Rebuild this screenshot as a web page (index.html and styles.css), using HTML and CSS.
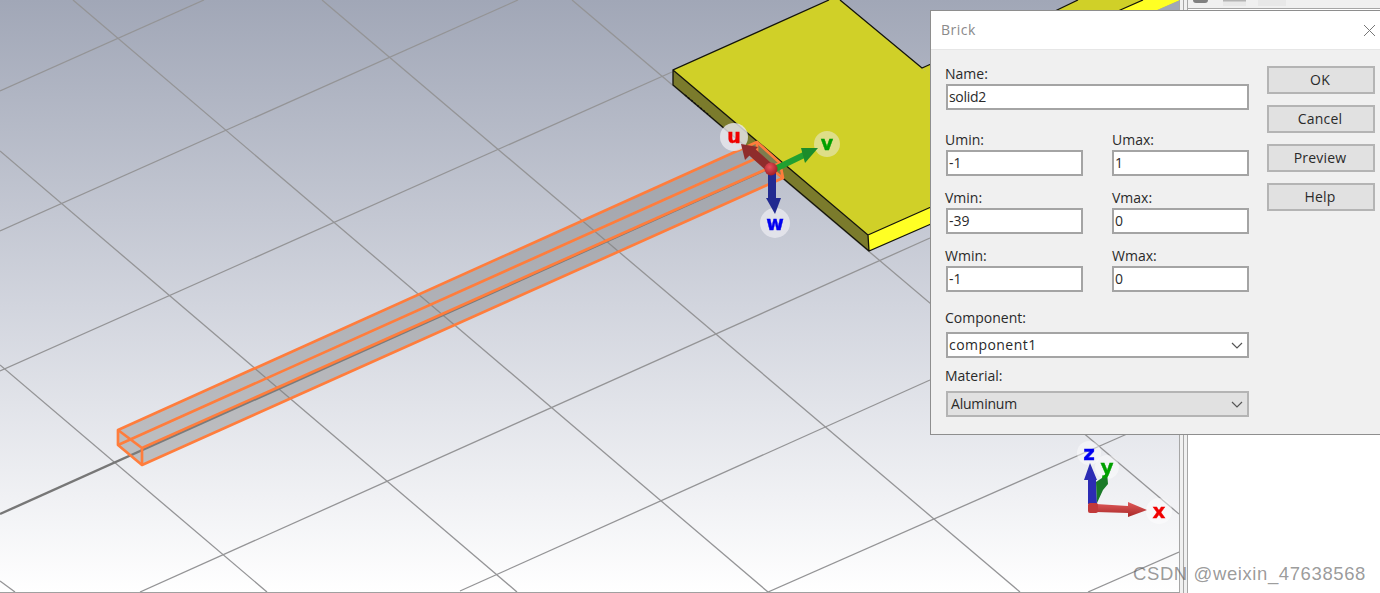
FILE: index.html
```html
<!DOCTYPE html>
<html lang="en">
<head>
<meta charset="utf-8">
<title>Brick</title>
<link rel="stylesheet" href="styles.css">
</head>
<body>
<div class="app">
  <main class="viewport">
    <svg class="scene" viewBox="0 0 1179 592" width="1179" height="592" aria-label="3D view">
      <defs>
        <radialGradient id="ball" cx="40%" cy="35%" r="70%">
          <stop offset="0" stop-color="#e8505a"/>
          <stop offset="1" stop-color="#9c1c24"/>
        </radialGradient>
        <linearGradient id="xshaft" x1="0" y1="0" x2="0" y2="1">
          <stop offset="0" stop-color="#e05a5a"/>
          <stop offset="1" stop-color="#a82828"/>
        </linearGradient>
      </defs>
      <g class="grid">
        <path d="M0 91L204 0"/>
        <path d="M0 231L518 0"/>
        <path d="M0 371L672 72"/>
        <path d="M140 592L930 238"/>
        <path d="M460 591L930 380"/>
        <path d="M768 592L1127 434"/>
        <path d="M1088 592L1179 552"/>
        <path d="M0 581L15 592"/>
        <path d="M0 365L267 592"/>
        <path d="M0 151L517 592"/>
        <path d="M73 0L768 592"/>
        <path d="M322 0L1020 592"/>
        <path d="M572 0L1179 514"/>
      </g>
      <path class="axis" d="M0 514L770 168"/>
      <polygon class="plate-back" points="1055,11 1078,0 1180,0 1180,11"/>
      <polygon class="plate-back-edge" points="1118,11 1143,0 1180,0 1155,11"/>
      <polygon class="plate-gap" points="1155,11 1180,0 1180,11"/>
      <path class="plate-line" d="M1118 11L1143 0M1055 11L1078 0"/>
      <polygon class="plate-back" points="922,68 931,64 931,78"/>
      <polygon class="plate-side" points="673,70 868,235 869,251 673,85"/>
      <polygon class="plate-front" points="868,235 931,207 931,224 869,251"/>
      <polygon class="plate-top" points="673,70 829,0 840,0 931,76 931,207 868,235"/>
      <path class="plate-line" d="M829 0L673 70L673 85L869 251L931 224M673 70L868 235L869 251M868 235L931 207M840 0L922 68L931 64"/>
      <path class="plate-jag" d="M685 95L710 116"/>
      <polygon class="bar-fill" points="118,430 757,142 780,163 783,178 142,465 118,445"/>
      <g class="bar-line">
        <path d="M118 430L757 142L780 163L783 178L142 465L118 445Z"/>
        <path d="M118 445L757 158L783 178M142 448L780 163M118 430L142 448L142 465M757 142L757 158"/>
      </g>
      <circle class="halo" cx="734" cy="137" r="14"/>
      <circle class="halo-v" cx="827" cy="144" r="13"/>
      <circle class="halo" cx="775" cy="223" r="15"/>
      <path class="u-shaft" d="M770 168L752 152"/>
      <polygon class="u-head" points="741,144 758,147 745,160"/>
      <path class="v-shaft" d="M775 169L806 154"/>
      <polygon class="v-head" points="818,148 801,148 805,163"/>
      <path class="w-shaft" d="M772 172L772 200"/>
      <polygon class="w-head" points="766,198 781,198 775,214"/>
      <circle cx="771" cy="169" r="6.5" fill="url(#ball)"/>
      <text class="glyph red" x="734" y="143">u</text>
      <text class="glyph green" x="827" y="150">v</text>
      <text class="glyph blue" x="775" y="230">w</text>
      <circle class="halo-soft" cx="1089" cy="453" r="12"/>
      <circle class="halo-soft" cx="1107" cy="467" r="12"/>
      <circle class="halo-soft" cx="1159" cy="511" r="13"/>
      <polygon class="z-arrow" points="1088,504 1088,480 1084,480 1090,463 1097,480 1096,480 1097,504"/>
      <polygon class="y-arrow" points="1097,503 1096,482 1102,478 1107,472 1108,484 1103,490"/>
      <polygon class="x-arrow" points="1096,504 1128,506 1128,502 1147,510 1128,517 1128,513 1096,512" fill="url(#xshaft)"/>
      <rect x="1088" y="503" width="10" height="10" rx="2" fill="#c23a3a"/>
      <text class="glyph-sm blue" x="1089" y="460">z</text>
      <text class="glyph-sm green" x="1107" y="474">y</text>
      <text class="glyph-sm red" x="1159" y="518">x</text>
    </svg>
  </main>
  <div class="splitter"></div>
  <aside class="panel">
    <div class="panel-tools">
      <span class="tool tool-round"></span>
      <span class="tool tool-a"></span>
      <span class="tool tool-b"></span>
    </div>
    <div class="panel-body"></div>
  </aside>
</div>

<section class="dialog">
  <header class="dialog-title">
    <span class="title-text">Brick</span>
    <svg class="close" width="13" height="13" viewBox="0 0 13 13"><path d="M1 1L12 12M12 1L1 12"/></svg>
  </header>
  <div class="dialog-body">
    <form class="form">
      <label class="label">Name:</label>
      <div class="input name-input">solid2</div>
      <div class="pairs">
        <div class="pair"><label class="label">Umin:</label><div class="input">-1</div></div>
        <div class="pair"><label class="label">Umax:</label><div class="input">1</div></div>
        <div class="pair"><label class="label">Vmin:</label><div class="input">-39</div></div>
        <div class="pair"><label class="label">Vmax:</label><div class="input">0</div></div>
        <div class="pair"><label class="label">Wmin:</label><div class="input">-1</div></div>
        <div class="pair"><label class="label">Wmax:</label><div class="input">0</div></div>
      </div>
      <label class="label comp-label">Component:</label>
      <div class="input select comp-value">component1
        <svg class="chev" width="12" height="7" viewBox="0 0 12 7"><path d="M1 1L6 6L11 1"/></svg>
      </div>
      <label class="label mat-label">Material:</label>
      <div class="input select mat-value disabled">Aluminum
        <svg class="chev" width="12" height="7" viewBox="0 0 12 7"><path d="M1 1L6 6L11 1"/></svg>
      </div>
    </form>
    <div class="buttons">
      <button class="btn" type="button">OK</button>
      <button class="btn" type="button">Cancel</button>
      <button class="btn" type="button">Preview</button>
      <button class="btn" type="button">Help</button>
    </div>
  </div>
</section>
<div class="watermark">CSDN @weixin_47638568</div>
</body>
</html>
```
FILE: styles.css
```css
* { box-sizing: border-box; }
html, body { margin: 0; height: 593px; overflow: hidden; background: #fff; }
body { position: relative; font-family: "Open Sans", "Noto Sans", sans-serif; }

.app { display: flex; width: 1380px; height: 593px; }

.viewport {
  width: 1179px;
  height: 593px;
  border-bottom: 1px solid #a0a0a0;
  background: linear-gradient(#a1a7b7 0%, #d2d5de 52%, #ffffff 100%);
  flex: none;
}
.scene { display: block; filter: blur(0.3px); }
.grid path { stroke: #949496; stroke-width: 1.3; fill: none; }
.axis { stroke: #777; stroke-width: 2.4; fill: none; }
.plate-top { fill: #d0d028; }
.plate-side { fill: #7b7b2c; }
.plate-front { fill: #ffff24; }
.plate-back { fill: #d0d028; }
.plate-back-edge { fill: #ffff24; }
.plate-gap { fill: #a1a7b7; }
.plate-line { stroke: #14140a; stroke-width: 1.3; fill: none; }
.plate-jag { stroke: #111; stroke-width: 1.5; stroke-dasharray: 2 2; fill: none; }
.bar-fill { fill: rgba(128, 128, 128, 0.42); }
.bar-line path { stroke: #ff7d3c; stroke-width: 2.7; fill: none; stroke-linejoin: round; }
.halo { fill: rgba(232, 232, 238, 0.82); }
.halo-v { fill: rgba(232, 232, 200, 0.6); }
.halo-soft { fill: rgba(255, 255, 255, 0.45); }
.u-shaft { stroke: #8f2c2c; stroke-width: 9; }
.u-head { fill: #8f2c2c; }
.v-shaft { stroke: #22a030; stroke-width: 6; }
.v-head { fill: #1c8c2a; }
.w-shaft { stroke: #222a90; stroke-width: 8; }
.w-head { fill: #222a90; }
.z-arrow { fill: #2c2cb4; }
.y-arrow { fill: #1a7a28; }
.glyph, .glyph-sm {
  font-family: "DejaVu Sans", sans-serif;
  font-weight: 700;
  text-anchor: middle;
  stroke-width: 0.4;
}
.glyph { font-size: 19px; }
.glyph-sm { font-size: 20px; }
.red { fill: #f00000; stroke: #f00000; }
.green { fill: #00a000; stroke: #00a000; }
.blue { fill: #0000f0; stroke: #0000f0; }

.splitter {
  width: 9px;
  height: 593px;
  flex: none;
  background: #f0f0f0;
  border-left: 1px solid #a6a6a6;
  border-right: 1px solid #a6a6a6;
  box-shadow: inset 3px 0 0 #f0f0f0, inset 4px 0 0 #a6a6a6;
}
.panel { flex: 1; display: flex; flex-direction: column; }
.panel-tools {
  height: 9px;
  flex: none;
  display: flex;
  background: #f0f0f0;
  border-bottom: 1px solid #a6a6a6;
  padding-left: 5px;
  overflow: hidden;
}
.tool { display: block; height: 6px; }
.tool-round { width: 15px; height: 3px; background: #808080; border-radius: 0 0 8px 8px; }
.tool-a { width: 23px; background: linear-gradient(#b4b4b4 1px, #e8e8e8 2px); margin-left: 15px; }
.tool-b { width: 28px; background: #e8e8e8; margin-left: 12px; }
.panel-body { flex: 1; background: #fff; }

.dialog {
  position: absolute;
  left: 930px;
  top: 10px;
  width: 452px;
  height: 425px;
  background: #f0f0f0;
  border: 1px solid #8e8e8e;
  color: #2a2a2a;
  font-size: 14px;
  line-height: 16px;
}
.dialog-title {
  height: 39px;
  background: #fff;
  border-bottom: 1px solid #e6e6e6;
  color: #8a8a8a;
  display: flex;
  align-items: center;
  justify-content: space-between;
  padding: 0 5px 0 10px;
}
.title-text { letter-spacing: 0.5px; }
.close path { stroke: #777; stroke-width: 1; fill: none; }
.dialog-body {
  display: flex;
  padding: 16px 0 0 15px;
  gap: 18px;
}
.form { width: 303px; display: flex; flex-direction: column; }
.label { display: block; height: 18px; margin-left: -1px; }
.pair:nth-child(even) .label { margin-left: 0; }
.input {
  height: 26px;
  background: #fff;
  border: 2px solid #a4a4a4;
  padding-left: 1px;
  line-height: 22px;
  position: relative;
}
.name-input { letter-spacing: -0.3px; }
.pairs {
  display: grid;
  grid-template-columns: 137px 137px;
  justify-content: space-between;
  margin-top: 22px;
  row-gap: 14px;
}
.comp-label { margin-top: 18px; }
.select { margin-top: 4px; }
.comp-value { letter-spacing: 0.45px; }
.mat-label { margin-top: 10px; }
.mat-value { margin-top: 5px; letter-spacing: -0.2px; }
.disabled { background: #e1e1e1; border-color: #b4b4b4; padding-left: 3px; }
.chev {
  position: absolute;
  right: 4px;
  top: 8px;
}
.chev path { stroke: #555; stroke-width: 1.2; fill: none; }
.buttons { width: 108px; display: flex; flex-direction: column; gap: 11px; }
.btn {
  height: 28px;
  padding: 0 2px 0 0;
  font: inherit;
  letter-spacing: 0.2px;
  color: #2a2a2a;
  background: #e1e1e1;
  border: 2px solid #b4b4b4;
}
.watermark {
  position: absolute;
  left: 1133px;
  top: 563px;
  font-family: "Liberation Sans", Arial, sans-serif;
  font-size: 18.5px;
  line-height: 22px;
  letter-spacing: 0.6px;
  color: rgba(90, 90, 90, 0.62);
  white-space: nowrap;
}
```
